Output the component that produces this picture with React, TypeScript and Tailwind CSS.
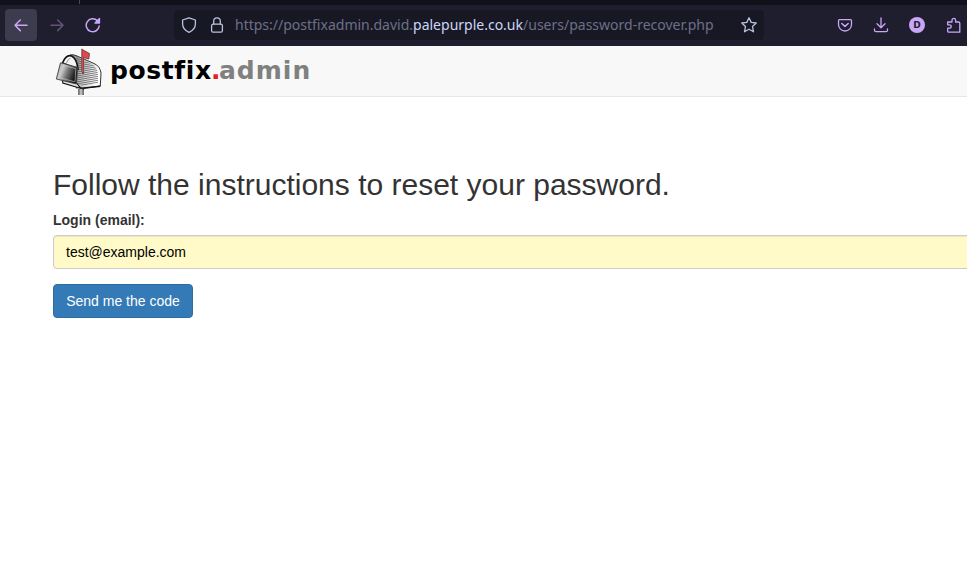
import React from "react";

const stroke = {
  fill: "none",
  stroke: "currentColor",
  strokeWidth: 1.3,
  strokeLinecap: "round" as const,
  strokeLinejoin: "round" as const,
};

function Icon({ children, className = "" }: { children: React.ReactNode; className?: string }) {
  return (
    <svg width="16" height="16" viewBox="0 0 16 16" className={"block shrink-0 " + className} {...stroke}>
      {children}
    </svg>
  );
}

function Mailbox() {
  return (
    <svg width="48" height="49" viewBox="55 47 48 49" className="block shrink-0">
      <defs>
        <linearGradient id="door" x1="0" y1="0" x2="1" y2="0.4">
          <stop offset="0" stopColor="#777" />
          <stop offset="0.35" stopColor="#ccc" />
          <stop offset="0.6" stopColor="#777" />
          <stop offset="1" stopColor="#111" />
        </linearGradient>
        <linearGradient id="side" x1="0" y1="0" x2="1" y2="0.2">
          <stop offset="0" stopColor="#777" />
          <stop offset="0.5" stopColor="#ccc" />
          <stop offset="1" stopColor="#fff" />
        </linearGradient>
        <pattern id="ribs" width="3" height="2" patternUnits="userSpaceOnUse" patternTransform="rotate(10)">
          <path d="M0 .5H3" stroke="#333" strokeWidth=".6" />
        </pattern>
      </defs>
      <path d="M70 55Q73 54 77 56L94 63.5Q100 66 101 73L100.3 86L82 88.5L76 84Z" fill="url(#side)" stroke="#333" strokeWidth="1" />
      <path d="M76 57L92 64Q97 67 98 74L98 83L82 86L77 83Z" fill="url(#ribs)" />
      <path d="M62.5 63C65 57 68 54.8 71.5 56Q76.5 58 78 69Z" fill="#f4f4f4" stroke="#111" strokeWidth="1.6" />
      <path d="M66.5 63Q68 58.5 70.5 58.3" fill="none" stroke="#999" strokeWidth="1" />
      <path d="M62.5 80L62.8 83L81 88.5L76.5 83Z" fill="#ddd" stroke="#111" strokeWidth="1.1" />
      <path d="M60.5 62.8L77.5 67.3L76.5 84L56.3 79Z" fill="url(#door)" stroke="#444" strokeWidth=".9" />
      <path d="M61.5 64.8L75.8 68.6L75 81.8L58.5 77.5Z" fill="none" stroke="#ccc" strokeWidth=".6" />
      <path d="M82 88.3L100.3 86.3" stroke="#111" strokeWidth="1.4" />
      <path d="M79 89V95M83 89V95M76 88Q80 86 84 89.5" fill="none" stroke="#222" strokeWidth="1.2" />
      <path d="M81 89V95" stroke="#bbb" strokeWidth="2.6" />
      <path d="M82 49L84 50.5L89.5 53.5L88.8 59L83.3 57.5V74L81.8 71V49Z" fill="#dc4b50" stroke="#4a2526" strokeWidth=".7" />
      <path d="M82.4 57V72" stroke="#d9474c" strokeWidth="1.3" />
    </svg>
  );
}

export default function App() {
  return (
    <div className="h-[585px] w-[967px] overflow-hidden bg-white font-['Liberation_Sans',Arial,sans-serif] text-sm text-[#333]">
      <div className="flex h-[5px] bg-[#11111b]">
        <div className="ml-[79px] h-1 w-px bg-[#45475a]" />
      </div>
      <nav className="flex h-[41px] items-center bg-[#1e1e2e] pb-px pl-[5px] text-[#cba6f7]">
        <button className="flex h-8 w-8 items-center justify-center rounded bg-[#3c3c4e]">
          <Icon><path d="M14 8.3H2.3M7.3 3L2 8.3L7.3 13.6" strokeWidth="1.5" /></Icon>
        </button>
        <div className="ml-3 text-[#645576]">
          <Icon><path d="M2 8.3H13.7M8.7 3L14 8.3L8.7 13.6" strokeWidth="1.5" /></Icon>
        </div>
        <div className="ml-5">
          <Icon><path d="M14.2 9A6.5 6.5 0 1 1 12.3 3.6" strokeWidth="1.5" /><path d="M14.5 1.5V6H10Z" fill="currentColor" /></Icon>
        </div>
        <div className="ml-[73px] flex h-[30px] w-[590px] items-center rounded bg-[#181825] pl-[7px] text-[#bac2de]">
          <Icon><path d="M8 .8L14.4 3V6.8C14.4 10.5 11.5 13.9 8 15.3C4.5 13.9 1.6 10.5 1.6 6.8V3Z" /></Icon>
          <Icon className="ml-3"><rect x="2.6" y="7.2" width="10.8" height="8" rx="1.5" /><path d="M4.7 7V4.2a3.3 3.3 0 0 1 6.6 0V7" /></Icon>
          <div className="ml-[10px] w-[479px] whitespace-nowrap font-['Noto_Sans',sans-serif] text-[14px] leading-5 text-[#6c7086]">
            https://postfixadmin.david.<span className="text-[#cdd6f4]">palepurple.co.uk</span>/users/password-recover.php
          </div>
          <Icon className="ml-[27px]"><path d="M8 .8L10.2 5.4L15.2 6L11.5 9.5L12.5 14.8L8 12.3L3.5 14.8L4.5 9.5L.8 6L5.8 5.4Z" /></Icon>
        </div>
        <div className="ml-[73px]">
          <Icon><path d="M2.5 2.7H13.5Q14.5 2.7 14.5 3.7V7.5A6.5 6.5 0 0 1 1.5 7.5V3.7Q1.5 2.7 2.5 2.7Z" /><path d="M4.8 6.5L8 9.4L11.2 6.5" strokeWidth="1.5" /></Icon>
        </div>
        <div className="ml-5">
          <Icon><path d="M8 .8V10.5M4 6.7L8 10.7L12 6.7M1.5 12V13.2Q1.5 14.7 3 14.7H13Q14.5 14.7 14.5 13.2V12" /></Icon>
        </div>
        <div className="ml-5 flex h-4 w-4 items-center justify-center rounded-full bg-[#cba6f7] font-['DejaVu_Sans',sans-serif] text-[9px] font-bold leading-none text-[#1e1e2e]">D</div>
        <div className="ml-[21px]">
          <Icon><path d="M2 5H6V3.2A1.8 1.8 0 0 1 9.6 3.2V5H12.5Q13.8 5 13.8 6.3V15.2H2.8Q1.7 15.2 1.7 14V11.2H3.5A1.7 1.7 0 0 0 3.5 7.8H1.7V5Z" /></Icon>
        </div>
      </nav>
      <header className="flex h-[51px] items-start border-b border-[#e7e7e7] bg-[#f8f8f8] pl-[55px] pt-px">
        <Mailbox />
        <div className="ml-[7px] mt-2 flex whitespace-nowrap font-['DejaVu_Sans',sans-serif] text-[25px] font-bold leading-[32px] [font-variant-ligatures:none]">
          <span className="w-[101px] tracking-[0.6px] text-black">postfix</span>
          <span className="w-[8px] text-[#e81c24]">.</span>
          <span className="tracking-[1px] text-[#808080]">admin</span>
        </div>
      </header>
      <main className="pl-[53px] pt-[71px]">
        <h1 className="whitespace-nowrap text-[30px] leading-[33px]">Follow the instructions to reset your password.</h1>
        <label className="mt-[9px] block font-bold leading-5">Login (email):</label>
        <div className="mt-[5px] h-[34px] w-[1140px] rounded border border-[#ccc] bg-[#fffac8] px-3 py-[6px] leading-5 text-black shadow-[inset_0_1px_1px_rgba(0,0,0,0.075)]">
          test@example.com
        </div>
        <button className="mt-[15px] block h-[34px] w-[140px] whitespace-nowrap rounded border border-[#2e6da4] bg-[#337ab7] text-sm leading-5 text-white">
          Send me the code
        </button>
      </main>
    </div>
  );
}
